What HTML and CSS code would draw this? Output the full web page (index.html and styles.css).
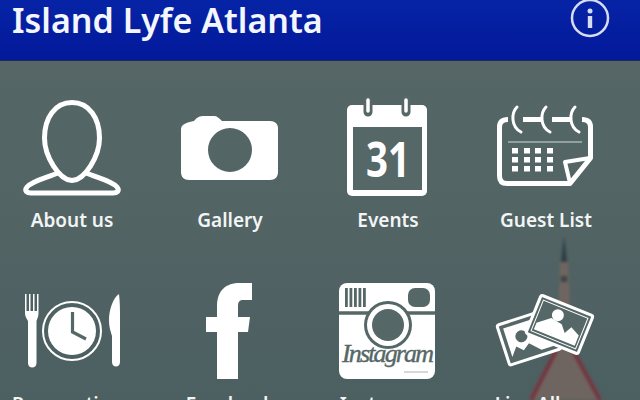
FILE: index.html
```html
<!DOCTYPE html>
<html lang="en">
<head>
  <meta charset="UTF-8" />
  <meta name="viewport" content="width=device-width, initial-scale=1.0" />
  <title>Island Lyfe Atlanta</title>
  <link rel="stylesheet" href="styles.css">
</head>
<body>

  <svg class="spire" viewBox="0 0 640 400" aria-hidden="true">
    <polygon points="560,262 568,262 572,345 603,400 528,400 557,345" fill="#6f6560"/>
    <polygon points="564,236 567,262 561,262" fill="#2f3d44"/>
    <path d="M559 345L531 400M570 345L600 400" fill="none" stroke="#74343e" stroke-width="4"/>
    <rect x="561" y="276" width="6" height="6" fill="#3e4444"/>
  </svg>

  <header class="topbar">
    <h1>Island Lyfe Atlanta</h1>
    <svg class="info" viewBox="0 0 40 40" aria-label="Info">
      <circle cx="20" cy="18" r="18" fill="none" stroke="#d5dcf4" stroke-width="2.5"/>
      <circle cx="20" cy="11" r="2.5" fill="#d5dcf4"/>
      <rect x="17.8" y="16" width="4.4" height="12" fill="#d5dcf4"/>
    </svg>
  </header>

  <main class="grid">

    <a class="tile" href="#">
      <svg class="icon" viewBox="0 0 120 104">
        <g fill="none" stroke="#fff" stroke-width="5" stroke-linejoin="round">
          <path d="M60 6.500C43 6.500 32.500 22 32.500 42C32.500 60 47 84 60 84.500C73 84 87.500 60 87.500 42C87.500 22 77 6.500 60 6.500Z"/>
          <path d="M46 77C34 82 20 85 15 91C12 95 15 97 19 97H101C105 97 108 95 105 91C100 85 86 82 74 77"/>
        </g>
      </svg>
      <span class="label">About us</span>
    </a>

    <a class="tile" href="#">
      <svg class="icon" viewBox="0 0 120 104">
        <path fill="#fff" fill-rule="evenodd" d="M24 25C27 21 30 20 34 20H44C47 20 49 22 52 25H100C105 25 108 28 108 32V76C108 81 105 84 100 84H19C14 84 11 81 11 76V34C11 29 14 27 24 25ZM60 32A22 22 0 1 0 60 76A22 22 0 1 0 60 32Z"/>
      </svg>
      <span class="label">Gallery</span>
    </a>

    <a class="tile" href="#">
      <svg class="icon" viewBox="0 0 120 104">
        <rect x="19" y="9" width="80" height="91" rx="5" fill="#fff"/>
        <rect class="cut" x="25" y="31" width="69" height="63"/>
        <g fill="none" stroke-linecap="round">
          <path class="cut-line" d="M40 4V16M78 4V16" stroke-width="9"/>
          <path d="M40 4V15M78 4V15" stroke="#fff" stroke-width="3.500"/>
        </g>
        <text class="date" x="60" y="81" textLength="44" lengthAdjust="spacingAndGlyphs">31</text>
      </svg>
      <span class="label">Events</span>
    </a>

    <a class="tile" href="#">
      <svg class="icon" viewBox="0 0 120 104">
        <g fill="none" stroke="#fff" stroke-width="5" stroke-linejoin="round">
          <path d="M22 23.500C16 23.500 13.500 26 13.500 31V80C13.500 85 16 87.500 21 87.500H84L104.500 62V31C104.500 26 102 23.500 96 23.500"/>
          <path d="M37 23.500H56M66 23.500H84"/>
          <path d="M104 62L79 66L84 87" stroke-width="4"/>
        </g>
        <g fill="none" stroke="#fff" stroke-width="3" stroke-linecap="round">
          <path d="M31 11C25 17 25 31 35 36M60 11C54 17 54 31 64 36M89 11C83 17 83 31 93 36"/>
        </g>
        <line x1="22" y1="46" x2="96" y2="46" stroke="#a9b5b4" stroke-width="1.500"/>
        <g fill="#fff">
          <rect x="26" y="52" width="6" height="5.500"/><rect x="38" y="52" width="6" height="5.500"/><rect x="49" y="52" width="6" height="5.500"/><rect x="61" y="52" width="6" height="5.500"/>
          <rect x="26" y="61" width="6" height="5.500"/><rect x="38" y="61" width="6" height="5.500"/><rect x="49" y="61" width="6" height="5.500"/><rect x="61" y="61" width="6" height="5.500"/>
          <rect x="26" y="70" width="6" height="5.500"/><rect x="38" y="70" width="6" height="5.500"/><rect x="49" y="70" width="6" height="5.500"/><rect x="61" y="70" width="6" height="5.500"/>
        </g>
      </svg>
      <span class="label">Guest List</span>
    </a>

    <a class="tile" href="#">
      <svg class="icon" viewBox="0 0 120 104">
        <path fill="#fff" d="M13 14H14.500V31H17V14H18.500V31H21V14H22.500V31H25V14H26.500V33C26.500 37 25 39 24.500 41V83C24.500 89 16 89 16 83V41C15 39 13 37 13 33Z"/>
        <circle cx="60" cy="51" r="29" fill="none" stroke="#fff" stroke-width="2"/>
        <circle cx="60" cy="51" r="24" fill="#fff"/>
        <path class="cut-line" d="M60.500 32V52L74 59" fill="none" stroke-width="3.200"/>
        <path fill="#fff" d="M107 14C101 18 97 30 97 40C97 48 99 52 100 56V82C100 88 108 88 108 82V40C108 30 108 22 107 14Z"/>
      </svg>
      <span class="label">Reservations</span>
    </a>

    <a class="tile" href="#">
      <svg class="icon" viewBox="0 0 120 104">
        <path fill="#fff" d="M47 99V52H36V37H47V27C47 10 56 3 70 3H82V20H73C69 20 68 22 68 27V37H80L78 52H68V99Z"/>
      </svg>
      <span class="label">Facebook</span>
    </a>

    <a class="tile" href="#">
      <svg class="icon" viewBox="0 0 120 104">
        <rect x="11" y="3" width="96" height="96" rx="8" fill="#fff"/>
        <path class="cut-line" d="M11 33H107" fill="none" stroke-width="3.500"/>
        <g class="cut">
          <rect x="17" y="8" width="2.800" height="19"/><rect x="21.500" y="8" width="2.800" height="19"/><rect x="26" y="8" width="2.800" height="19"/><rect x="30.500" y="8" width="2.800" height="19"/><rect x="35" y="8" width="2.800" height="19"/>
          <rect x="80" y="8" width="22" height="19" rx="7"/>
          <circle cx="60" cy="45" r="24"/>
        </g>
        <circle cx="60" cy="45" r="21" fill="#fff"/>
        <circle class="cut" cx="60" cy="45" r="16"/>
        <text class="script" x="60" y="82" textLength="92">Instagram</text>
        <line x1="76" y1="92" x2="100" y2="92" stroke="#a9b5b4" stroke-width="1"/>
      </svg>
      <span class="label">Instagram</span>
    </a>

    <a class="tile" href="#">
      <svg class="icon" viewBox="0 0 120 104">
        <g transform="translate(43 57) rotate(-18)">
          <rect x="-27" y="-21" width="54" height="42" rx="2" class="cut" stroke="#fff" stroke-width="3"/>
          <path fill="#fff" d="M-22 -16H22V16H8L-2 6L-9 11L-15 5L-22 14Z"/>
          <circle class="cut" cx="-7" cy="-3" r="6"/>
        </g>
        <g transform="translate(73.500 44.500) rotate(22)">
          <rect x="-28" y="-20.500" width="56" height="41" rx="2" class="cut" stroke="#fff" stroke-width="3"/>
          <rect x="-24" y="-16.500" width="48" height="33" fill="none" stroke="#fff" stroke-width="1"/>
          <path fill="#fff" d="M-22 14V7L-10 -3L2 -1L8 6L12 -2L22 3V14Z"/>
          <circle cx="-5" cy="-8" r="6" fill="#fff"/>
        </g>
      </svg>
      <span class="label">Live Album</span>
    </a>

  </main>

</body>
</html>
```

FILE: styles.css
```css
html, body {
  height: 100%;
}

body {
  margin: 0;
  width: 640px;
  height: 400px;
  overflow: hidden;
  position: relative;
  font-family: "Noto Sans", "Open Sans", sans-serif;
  color: #f2f5f5;
  background: linear-gradient(180deg, #566666 0%, #546565 40%, #4c5f61 100%);
}

a {
  color: inherit;
  text-decoration: none;
}

.spire {
  position: absolute;
  left: 0;
  top: 0;
  width: 640px;
  height: 400px;
  filter: blur(1.5px);
}

.topbar {
  position: relative;
  height: 61px;
  box-sizing: border-box;
  padding: 0 30px 0 12px;
  display: flex;
  justify-content: space-between;
  align-items: flex-start;
  background: linear-gradient(180deg, #0623a6 0%, #03199a 100%);
  border-bottom: 1px solid #1c2d55;
  color: #f4f6fd;
}

.topbar h1 {
  margin: 0;
  font-size: 34px;
  font-weight: 600;
  line-height: 40px;
}

.info {
  width: 40px;
  height: 40px;
  flex: none;
}

.grid {
  position: relative;
  display: grid;
  grid-template-columns: repeat(4, 144px);
  column-gap: 14px;
  row-gap: 46px;
  padding-top: 35px;
}

.tile {
  display: flex;
  flex-direction: column;
  align-items: center;
}

.icon {
  width: 120px;
  height: 104px;
}

.label {
  margin-top: 6px;
  font-size: 19px;
  font-weight: 600;
  line-height: 28px;
  white-space: nowrap;
}

.cut {
  fill: #566767;
}

.cut-line {
  stroke: #566767;
}

.date {
  font-family: "Noto Sans", sans-serif;
  font-size: 48px;
  font-weight: 700;
  fill: #fff;
  text-anchor: middle;
}

.script {
  font-family: "Liberation Serif", serif;
  font-style: italic;
  font-size: 26px;
  fill: #566767;
  stroke: #566767;
  stroke-width: 0.4px;
  text-anchor: middle;
}
```
